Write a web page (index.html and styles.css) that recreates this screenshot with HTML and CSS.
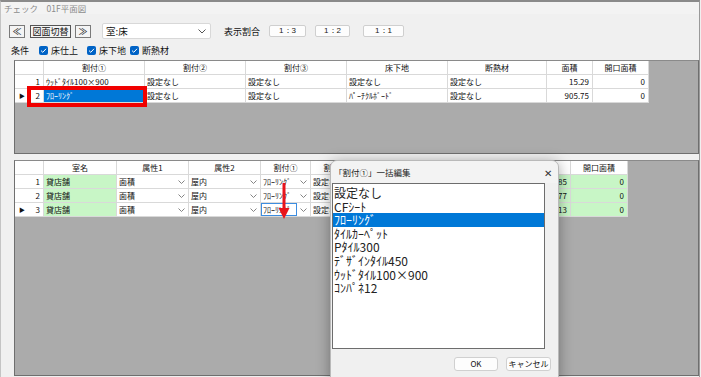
FILE: index.html
```html
<!DOCTYPE html>
<html lang="ja">
<head>
<meta charset="utf-8">
<title>チェック 01F平面図</title>
<link rel="stylesheet" href="styles.css">
</head>
<body>
<div class="window">
  <div class="titlebar">チェック　01F平面図</div>
  <div class="toolbar">
    <button class="btn nav">≪</button>
    <button class="btn switch">図面切替</button>
    <button class="btn nav next">≫</button>
    <div class="select"><span>室:床</span><svg class="chev" width="8" height="5" viewBox="0 0 8 5"><path d="M0.5 0.5 L4 4 L7.5 0.5" fill="none" stroke="#555" stroke-width="1"/></svg></div>
    <span class="ratio-label">表示割合</span>
    <button class="ratio r3">1：3</button>
    <button class="ratio r2">1：2</button>
    <button class="ratio r1">1：1</button>
  </div>
  <div class="conds">
    <span class="cond-label">条件</span>
    <span class="chk c1"><svg width="9" height="9" viewBox="0 0 9 9"><rect width="9" height="9" rx="2" fill="#0063c6"/><path d="M2 4.6 L3.8 6.3 L7 2.8" fill="none" stroke="#fff" stroke-width="1"/></svg>床仕上</span>
    <span class="chk c2"><svg width="9" height="9" viewBox="0 0 9 9"><rect width="9" height="9" rx="2" fill="#0063c6"/><path d="M2 4.6 L3.8 6.3 L7 2.8" fill="none" stroke="#fff" stroke-width="1"/></svg>床下地</span>
    <span class="chk c3"><svg width="9" height="9" viewBox="0 0 9 9"><rect width="9" height="9" rx="2" fill="#0063c6"/><path d="M2 4.6 L3.8 6.3 L7 2.8" fill="none" stroke="#fff" stroke-width="1"/></svg>断熱材</span>
  </div>

  <div class="panel top-panel">
    <div class="row top-cols head">
      <div class="c rh"></div>
      <div class="c hc">割付①</div>
      <div class="c hc">割付②</div>
      <div class="c hc">割付③</div>
      <div class="c hc">床下地</div>
      <div class="c hc">断熱材</div>
      <div class="c hc">面積</div>
      <div class="c hc">開口面積</div>
    </div>
    <div class="row top-cols">
      <div class="c rh"><span class="num">1</span></div>
      <div class="c">ｳｯﾄﾞﾀｲﾙ100×900</div>
      <div class="c">設定なし</div>
      <div class="c">設定なし</div>
      <div class="c">設定なし</div>
      <div class="c">設定なし</div>
      <div class="c r">15.29</div>
      <div class="c r">0</div>
    </div>
    <div class="row top-cols">
      <div class="c rh"><span class="cur">▶</span><span class="num">2</span></div>
      <div class="c sel">ﾌﾛｰﾘﾝｸﾞ</div>
      <div class="c">設定なし</div>
      <div class="c">設定なし</div>
      <div class="c">ﾊﾟｰﾁｸﾙﾎﾞｰﾄﾞ</div>
      <div class="c">設定なし</div>
      <div class="c r">905.75</div>
      <div class="c r">0</div>
    </div>
  </div>

  <div class="panel bottom-panel">
    <div class="row bot-cols head">
      <div class="c rh"></div>
      <div class="c hc">室名</div>
      <div class="c hc">属性1</div>
      <div class="c hc">属性2</div>
      <div class="c hc">割付①</div>
      <div class="c hc">割付②</div>
      <div class="c hc">割付③</div>
      <div class="c hc">床下地</div>
      <div class="c hc">断熱材</div>
      <div class="c hc">面積</div>
      <div class="c hc">開口面積</div>
    </div>
    <div class="row bot-cols">
      <div class="c rh"><span class="num">1</span></div>
      <div class="c g">貸店舗</div>
      <div class="c combo"><span class="t">面積</span><span class="dd"><svg width="7" height="4" viewBox="0 0 7 4"><path d="M0.5 0.5 L3.5 3.5 L6.5 0.5" fill="none" stroke="#777" stroke-width="0.9"/></svg></span></div>
      <div class="c combo"><span class="t">屋内</span><span class="dd"><svg width="7" height="4" viewBox="0 0 7 4"><path d="M0.5 0.5 L3.5 3.5 L6.5 0.5" fill="none" stroke="#777" stroke-width="0.9"/></svg></span></div>
      <div class="c combo"><span class="t">ﾌﾛｰﾘﾝｸﾞ</span><span class="dd"><svg width="7" height="4" viewBox="0 0 7 4"><path d="M0.5 0.5 L3.5 3.5 L6.5 0.5" fill="none" stroke="#777" stroke-width="0.9"/></svg></span></div>
      <div class="c">設定なし</div>
      <div class="c">設定なし</div>
      <div class="c">設定なし</div>
      <div class="c">設定なし</div>
      <div class="c r g">15.85</div>
      <div class="c r g">0</div>
    </div>
    <div class="row bot-cols">
      <div class="c rh"><span class="num">2</span></div>
      <div class="c g">貸店舗</div>
      <div class="c combo"><span class="t">面積</span><span class="dd"><svg width="7" height="4" viewBox="0 0 7 4"><path d="M0.5 0.5 L3.5 3.5 L6.5 0.5" fill="none" stroke="#777" stroke-width="0.9"/></svg></span></div>
      <div class="c combo"><span class="t">屋内</span><span class="dd"><svg width="7" height="4" viewBox="0 0 7 4"><path d="M0.5 0.5 L3.5 3.5 L6.5 0.5" fill="none" stroke="#777" stroke-width="0.9"/></svg></span></div>
      <div class="c combo"><span class="t">ﾌﾛｰﾘﾝｸﾞ</span><span class="dd"><svg width="7" height="4" viewBox="0 0 7 4"><path d="M0.5 0.5 L3.5 3.5 L6.5 0.5" fill="none" stroke="#777" stroke-width="0.9"/></svg></span></div>
      <div class="c">設定なし</div>
      <div class="c">設定なし</div>
      <div class="c">設定なし</div>
      <div class="c">設定なし</div>
      <div class="c r g">12.77</div>
      <div class="c r g">0</div>
    </div>
    <div class="row bot-cols">
      <div class="c rh"><span class="cur">▶</span><span class="num">3</span></div>
      <div class="c g">貸店舗</div>
      <div class="c combo"><span class="t">面積</span><span class="dd"><svg width="7" height="4" viewBox="0 0 7 4"><path d="M0.5 0.5 L3.5 3.5 L6.5 0.5" fill="none" stroke="#777" stroke-width="0.9"/></svg></span></div>
      <div class="c combo"><span class="t">屋内</span><span class="dd"><svg width="7" height="4" viewBox="0 0 7 4"><path d="M0.5 0.5 L3.5 3.5 L6.5 0.5" fill="none" stroke="#777" stroke-width="0.9"/></svg></span></div>
      <div class="c combo"><span class="t focus">ﾌﾛｰﾘﾝｸﾞ</span><span class="dd"><svg width="7" height="4" viewBox="0 0 7 4"><path d="M0.5 0.5 L3.5 3.5 L6.5 0.5" fill="none" stroke="#777" stroke-width="0.9"/></svg></span></div>
      <div class="c">設定なし</div>
      <div class="c">設定なし</div>
      <div class="c">設定なし</div>
      <div class="c">設定なし</div>
      <div class="c r g">10.13</div>
      <div class="c r g">0</div>
    </div>
  </div>
</div>

<div class="red-box"></div>
<svg class="arrow" width="14" height="40" viewBox="0 0 14 40"><path d="M7 0 V27" stroke="#e8141c" stroke-width="3"/><path d="M1.5 25 L12.5 25 L7 36 Z" fill="#e8141c"/></svg>

<div class="dialog">
  <div class="dlg-title"><span>「割付①」一括編集</span><span class="close">✕</span></div>
  <div class="listbox">
    <div class="item">設定なし</div>
    <div class="item">CFｼｰﾄ</div>
    <div class="item on">ﾌﾛｰﾘﾝｸﾞ</div>
    <div class="item">ﾀｲﾙｶｰﾍﾟｯﾄ</div>
    <div class="item">Pﾀｲﾙ300</div>
    <div class="item">ﾃﾞｻﾞｲﾝﾀｲﾙ450</div>
    <div class="item">ｳｯﾄﾞﾀｲﾙ100×900</div>
    <div class="item">ｺﾝﾊﾟﾈ12</div>
  </div>
  <div class="dlg-buttons">
    <button class="dbtn ok">OK</button>
    <button class="dbtn cancel">キャンセル</button>
  </div>
</div>
</body>
</html>
```

FILE: styles.css
```css
* { box-sizing: border-box; }
html, body { margin: 0; padding: 0; }
body {
  width: 701px;
  height: 377px;
  overflow: hidden;
  position: relative;
  background: #f0f0f0;
  font-family: "Noto Sans CJK JP", "Noto Sans", sans-serif;
  font-size: 9px;
  color: #111;
}
.window {
  width: 700px;
  height: 377px;
  border-top: 2px solid #8a8a8a;
  border-left: 1px solid #c4c4c4;
  border-right: 1px solid #9a9a9a;
  background: #f0f0f0;
}
.titlebar {
  height: 12px;
  line-height: 12px;
  padding-left: 3px;
  color: #8c8c8c;
  font-size: 8.5px;
  background: #f3f3f3;
}
.toolbar {
  display: flex;
  align-items: center;
  height: 16px;
  margin-top: 9px;
  padding-left: 8px;
}
.btn {
  height: 13px;
  padding: 0;
  border: 1px solid #7a7a7a;
  background: #f4f4f4;
  font-family: inherit;
  font-size: 9px;
  line-height: 11px;
  color: #111;
}
.nav { width: 16px; }
.switch { width: 41px; margin-left: 5px; border-color: #555; }
.next { margin-left: 4px; }
.select {
  width: 109px;
  height: 16px;
  margin-left: 11px;
  background: #fff;
  border: 1px solid #d8d8d8;
  border-radius: 2px;
  display: flex;
  align-items: center;
  justify-content: space-between;
  padding: 0 4px 0 3px;
  font-size: 9.5px;
}
.ratio-label { margin-left: 13px; font-size: 9px; }
.ratio {
  height: 12px;
  padding: 0;
  background: #fdfdfd;
  border: 1px solid #cfcfcf;
  border-radius: 2px;
  font-family: "Liberation Sans", sans-serif;
  font-size: 8px;
  line-height: 10px;
  color: #222;
}
.r3 { width: 37px; margin-left: 9px; }
.r2 { width: 35px; margin-left: 9px; }
.r1 { width: 41px; margin-left: 13px; }

.conds {
  display: flex;
  align-items: center;
  height: 11px;
  margin-top: 6px;
  padding-left: 10px;
  font-size: 9px;
}
.cond-label { width: 28px; }
.chk { display: flex; align-items: center; gap: 3px; }
.chk svg { display: block; }
.c2 { margin-left: 9px; }
.c3 { margin-left: 4px; }

.panel {
  margin-left: 13px;
  width: 685px;
  background: #ababab;
  border: 1px solid #6f6f6f;
  border-top-color: #8a8a8a;
}
.top-panel { margin-top: 4px; height: 94px; }
.bottom-panel { margin-top: 6px; height: 216px; }

.row { display: grid; height: 14px; }
.top-cols { grid-template-columns: 29px 101px 101px 101px 101px 99px 46px 56px; }
.bot-cols { grid-template-columns: 29px 73px 72px 72px 50px 50px 50px 50px 50px 60px 57px; }

.c {
  background: #fff;
  border-right: 1px solid #d9d9d9;
  border-bottom: 1px solid #d9d9d9;
  font-size: 8px;
  line-height: 13px;
  padding-left: 2px;
  white-space: nowrap;
  overflow: hidden;
}
.hc { text-align: center; padding-left: 0; }
.r { text-align: right; padding-right: 3px; }
.rh { display: flex; justify-content: space-between; padding: 0 3px 0 4px; }
.rh .num { margin-left: auto; }
.cur { font-size: 6px; }
.sel { background: #0078d7; color: #fff; }
.g { background: #c8f6c6; }

.combo { display: flex; padding-left: 0; }
.combo .t { flex: 1; padding-left: 2px; height: 13px; }
.combo .t.focus { border: 1px solid #3d8de0; line-height: 11px; padding-left: 1px; }
.combo .dd {
  width: 13px;
  display: flex;
  align-items: center;
  justify-content: center;
}
.combo .dd svg { display: block; }

.red-box {
  position: absolute;
  left: 27px;
  top: 86px;
  width: 120px;
  height: 21px;
  border: 4px solid #f00000;
}
.arrow {
  position: absolute;
  left: 277px;
  top: 183px;
}

.dialog {
  position: absolute;
  left: 330px;
  top: 160px;
  width: 229px;
  height: 222px;
  background: #f0f0f0;
  border: 1px solid #b9b9b9;
  border-radius: 7px 7px 0 0;
  box-shadow: 0 2px 14px rgba(0,0,0,0.35);
}
.dlg-title {
  height: 22px;
  display: flex;
  align-items: center;
  justify-content: space-between;
  padding: 0 6px 0 3px;
  font-size: 8.5px;
  color: #222;
  background: #f3f3f3;
  border-radius: 7px 7px 0 0;
}
.close { font-size: 10px; color: #333; }
.listbox {
  margin-left: 1px;
  width: 213px;
  height: 166px;
  background: #fff;
  border: 1px solid #6d6d6d;
  padding-top: 2px;
}
.item {
  height: 13.6px;
  line-height: 13.6px;
  font-size: 12px;
  padding-left: 1px;
  color: #222;
  white-space: nowrap;
}
.item.on { background: #0078d7; color: #fff; }
.dlg-buttons {
  display: flex;
  justify-content: flex-end;
  gap: 8px;
  margin-top: 8px;
  padding-right: 7px;
}
.dbtn {
  height: 14px;
  padding: 0;
  background: #fdfdfd;
  border: 1px solid #d0d0d0;
  border-radius: 3px;
  font-family: inherit;
  font-size: 8px;
  line-height: 12px;
  color: #111;
  white-space: nowrap;
}
.ok { width: 44px; }
.cancel { width: 45px; }
```
